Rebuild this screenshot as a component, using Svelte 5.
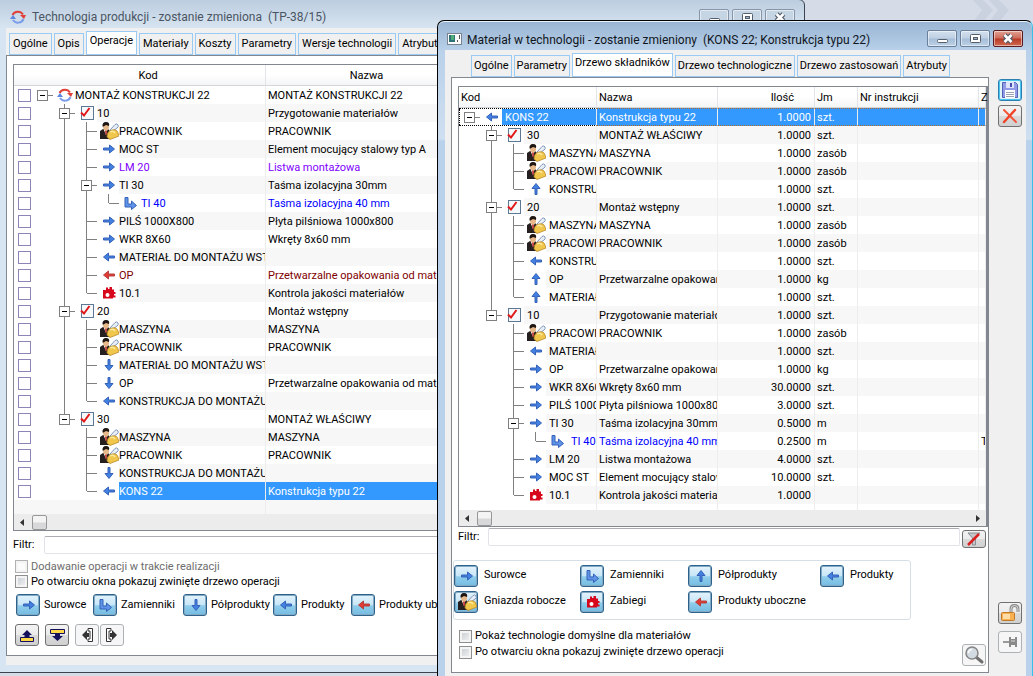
<script lang="ts">
	type Row = {
		depth: number;
		icon: string;
		kod: string;
		nazwa?: string;
		ilosc?: string;
		jm?: string;
		z?: string;
		color?: string;
		open?: boolean;
		selected?: boolean;
	};

	const operationTabs = [
		'Ogólne',
		'Opis',
		'Operacje',
		'Materiały',
		'Koszty',
		'Parametry',
		'Wersje technologii',
		'Atrybuty'
	];
	const materialTabs = [
		'Ogólne',
		'Parametry',
		'Drzewo składników',
		'Drzewo technologiczne',
		'Drzewo zastosowań',
		'Atrybuty'
	];

	let operationTab = $state('Operacje');
	let materialTab = $state('Drzewo składników');
	let operationFilter = $state('');
	let materialFilter = $state('');

	const operations: Row[] = [
		{ depth: 0, icon: 'cycle', kod: 'MONTAŻ KONSTRUKCJI 22', nazwa: 'MONTAŻ KONSTRUKCJI 22', open: true },
		{ depth: 1, icon: 'check', kod: '10', nazwa: 'Przygotowanie materiałów', open: true },
		{ depth: 2, icon: 'worker', kod: 'PRACOWNIK', nazwa: 'PRACOWNIK' },
		{ depth: 2, icon: 'right', kod: 'MOC ST', nazwa: 'Element mocujący stalowy typ A' },
		{ depth: 2, icon: 'right', kod: 'LM 20', nazwa: 'Listwa montażowa', color: 'purple' },
		{ depth: 2, icon: 'right', kod: 'TI 30', nazwa: 'Taśma izolacyjna 30mm', open: true },
		{ depth: 3, icon: 'elbow', kod: 'TI 40', nazwa: 'Taśma izolacyjna 40 mm', color: 'blue' },
		{ depth: 2, icon: 'right', kod: 'PILŚ 1000X800', nazwa: 'Płyta pilśniowa 1000x800' },
		{ depth: 2, icon: 'right', kod: 'WKR 8X60', nazwa: 'Wkręty 8x60 mm' },
		{ depth: 2, icon: 'left', kod: 'MATERIAŁ DO MONTAŻU WSTĘPNEGO' },
		{ depth: 2, icon: 'redleft', kod: 'OP', nazwa: 'Przetwarzalne opakowania od materiałów', color: 'maroon' },
		{ depth: 2, icon: 'gear', kod: '10.1', nazwa: 'Kontrola jakości materiałów' },
		{ depth: 1, icon: 'check', kod: '20', nazwa: 'Montaż wstępny', open: true },
		{ depth: 2, icon: 'worker', kod: 'MASZYNA', nazwa: 'MASZYNA' },
		{ depth: 2, icon: 'worker', kod: 'PRACOWNIK', nazwa: 'PRACOWNIK' },
		{ depth: 2, icon: 'down', kod: 'MATERIAŁ DO MONTAŻU WSTĘPNEGO' },
		{ depth: 2, icon: 'down', kod: 'OP', nazwa: 'Przetwarzalne opakowania od materiałów' },
		{ depth: 2, icon: 'left', kod: 'KONSTRUKCJA DO MONTAŻU WŁAŚCIWEGO' },
		{ depth: 1, icon: 'check', kod: '30', nazwa: 'MONTAŻ WŁAŚCIWY', open: true },
		{ depth: 2, icon: 'worker', kod: 'MASZYNA', nazwa: 'MASZYNA' },
		{ depth: 2, icon: 'worker', kod: 'PRACOWNIK', nazwa: 'PRACOWNIK' },
		{ depth: 2, icon: 'down', kod: 'KONSTRUKCJA DO MONTAŻU WŁAŚCIWEGO' },
		{ depth: 2, icon: 'left', kod: 'KONS 22', nazwa: 'Konstrukcja typu 22', selected: true }
	];

	const components: Row[] = [
		{ depth: 0, icon: 'left', kod: 'KONS 22', nazwa: 'Konstrukcja typu 22', ilosc: '1.0000', jm: 'szt.', open: true, selected: true },
		{ depth: 1, icon: 'check', kod: '30', nazwa: 'MONTAŻ WŁAŚCIWY', ilosc: '1.0000', jm: 'szt.', open: true },
		{ depth: 2, icon: 'worker', kod: 'MASZYNA', nazwa: 'MASZYNA', ilosc: '1.0000', jm: 'zasób' },
		{ depth: 2, icon: 'worker', kod: 'PRACOWNIK', nazwa: 'PRACOWNIK', ilosc: '1.0000', jm: 'zasób' },
		{ depth: 2, icon: 'up', kod: 'KONSTRUKCJA', ilosc: '1.0000', jm: 'szt.' },
		{ depth: 1, icon: 'check', kod: '20', nazwa: 'Montaż wstępny', ilosc: '1.0000', jm: 'szt.', open: true },
		{ depth: 2, icon: 'worker', kod: 'MASZYNA', nazwa: 'MASZYNA', ilosc: '1.0000', jm: 'zasób' },
		{ depth: 2, icon: 'worker', kod: 'PRACOWNIK', nazwa: 'PRACOWNIK', ilosc: '1.0000', jm: 'zasób' },
		{ depth: 2, icon: 'left', kod: 'KONSTRUKCJA', ilosc: '1.0000', jm: 'szt.' },
		{ depth: 2, icon: 'up', kod: 'OP', nazwa: 'Przetwarzalne opakowania', ilosc: '1.0000', jm: 'kg' },
		{ depth: 2, icon: 'up', kod: 'MATERIAŁ', ilosc: '1.0000', jm: 'szt.' },
		{ depth: 1, icon: 'check', kod: '10', nazwa: 'Przygotowanie materiałów', ilosc: '1.0000', jm: 'szt.', open: true },
		{ depth: 2, icon: 'worker', kod: 'PRACOWNIK', nazwa: 'PRACOWNIK', ilosc: '1.0000', jm: 'zasób' },
		{ depth: 2, icon: 'left', kod: 'MATERIAŁ', ilosc: '1.0000', jm: 'szt.' },
		{ depth: 2, icon: 'right', kod: 'OP', nazwa: 'Przetwarzalne opakowania', ilosc: '1.0000', jm: 'kg' },
		{ depth: 2, icon: 'right', kod: 'WKR 8X60', nazwa: 'Wkręty 8x60 mm', ilosc: '30.0000', jm: 'szt.' },
		{ depth: 2, icon: 'right', kod: 'PILŚ 1000X800', nazwa: 'Płyta pilśniowa 1000x800', ilosc: '3.0000', jm: 'szt.' },
		{ depth: 2, icon: 'right', kod: 'TI 30', nazwa: 'Taśma izolacyjna 30mm', ilosc: '0.5000', jm: 'm', open: true },
		{ depth: 3, icon: 'elbow', kod: 'TI 40', nazwa: 'Taśma izolacyjna 40 mm', ilosc: '0.2500', jm: 'm', z: 'TI 30', color: 'blue' },
		{ depth: 2, icon: 'right', kod: 'LM 20', nazwa: 'Listwa montażowa', ilosc: '4.0000', jm: 'szt.' },
		{ depth: 2, icon: 'right', kod: 'MOC ST', nazwa: 'Element mocujący stalowy typ A', ilosc: '10.0000', jm: 'szt.' },
		{ depth: 2, icon: 'gear', kod: '10.1', nazwa: 'Kontrola jakości materiałów', ilosc: '1.0000' }
	];

	const operationLegend = [
		['right', 'Surowce'],
		['elbow', 'Zamienniki'],
		['down', 'Półprodukty'],
		['left', 'Produkty'],
		['redleft', 'Produkty uboczne']
	];
	const materialLegend = [
		['right', 'Surowce'],
		['elbow', 'Zamienniki'],
		['up', 'Półprodukty'],
		['left', 'Produkty'],
		['worker', 'Gniazda robocze'],
		['gear', 'Zabiegi'],
		['redleft', 'Produkty uboczne']
	];

	// does the branch at this depth go on below row i?
	function continues(rows: Row[], i: number, depth: number) {
		for (let j = i + 1; j < rows.length; j++) {
			if (rows[j].depth < depth) return false;
			if (rows[j].depth === depth) return true;
		}
		return false;
	}

	function guides(rows: Row[], i: number) {
		const row = rows[i];
		const out: string[] = [];
		for (let d = 0; d <= row.depth; d++) {
			const more = d > 0 && continues(rows, i, d);
			if (d < row.depth) out.push(more ? 'M11.5 0V18' : '');
			else out.push((d > 0 ? 'M11.5 0V9' : '') + (more ? 'M11.5 9V18' : '') + 'M11.5 9.5H22');
		}
		return out;
	}

	const turn: Record<string, number> = { right: 0, down: 90, left: 180, redleft: 180, up: 270 };
</script>

{#snippet icon(name: string)}
	<svg class="icon" width="22" height="18" viewBox="0 0 22 18" aria-hidden="true">
		{#if name in turn}
			<path
				d="M6.5 8H12.500V5L17.500 9L12.500 13V10H6.500Z"
				transform="rotate({turn[name]} 12 9)"
				fill={name === 'redleft' ? '#e23a35' : '#4280e2'}
				stroke={name === 'redleft' ? '#b3403c' : '#3562b8'}
				stroke-width="1"
			/>
		{:else if name === 'elbow'}
			<path d="M6 3.500H9V10H12.500V7L17.500 11.500L12.500 15.500V13H6Z" fill="#5f93e8" stroke="#3562b8" />
		{:else if name === 'cycle'}
			<path d="M6.500 7A6 6 0 0 1 17 6.500" fill="none" stroke="#e04038" stroke-width="2" />
			<path d="M14 7h6l-2 4z" fill="#e04038" />
			<path d="M17.500 11A6 6 0 0 1 7 12" fill="none" stroke="#7a9ce8" stroke-width="2" />
			<path d="M4 11h6L7 7z" fill="#5b86e0" />
		{:else if name === 'check'}
			<rect x="6.500" y="2.500" width="12" height="13" fill="#f6f9fc" stroke="#5d7894" />
			<path d="M6 8.500L9 11.500L14.500 4" fill="none" stroke="#e01818" stroke-width="2" />
		{:else if name === 'worker'}
			<path d="M3 17V9L6 7H11L13 9V17Z" fill="#25201f" />
			<path d="M6.500 7L9 13L10.500 7Z" fill="#fff" />
			<path d="M8 8h2l-.5 5h-1z" fill="#c22525" />
			<path d="M6 2h6v4q-1 3-3 3T6 6z" fill="#e7b98a" />
			<path d="M5.500 4.500Q5 0 9 0T12 4L9 3L6.500 4.500Z" fill="#1c1512" />
			<path d="M13 8L18 2.500Q20 1 21 3T20 6L16 9Z" fill="#e7eef8" stroke="#8298b8" />
			<path d="M10 15Q10 9 15 8Q20 7 21 11L22 14L13 17.500Z" fill="#f0c64b" stroke="#b98a2a" stroke-width=".8" />
			<path d="M13 10Q16 8 18 11" fill="none" stroke="#fbeaa0" stroke-width="1.500" />
		{:else if name === 'gear'}
			<path
				d="M6 6H9V3.500H11V5H12.500V3H15V5.500H17V8H18.500V10H17V11.500H18.500V13.500H16V14.500H6Z"
				fill="#d8081c"
			/>
			<circle cx="10.500" cy="11" r="2" fill="#fff" />
		{/if}
	</svg>
{/snippet}

{#snippet tree(rows: Row[], i: number)}
	<div class="node">
		{#each guides(rows, i) as d, n}
			<svg class="guide" width="22" height="18" viewBox="0 0 22 18" aria-hidden="true">
				<path {d} fill="none" stroke="#808080" />
				{#if n === rows[i].depth && rows[i].open}
					<rect x="6.500" y="4.500" width="10" height="10" fill="#fff" stroke="#808080" />
					<path d="M9 9.500H14" stroke="#000" />
				{/if}
			</svg>
		{/each}
		{@render icon(rows[i].icon)}
		<span class="label">{rows[i].kod}</span>
	</div>
{/snippet}

{#snippet scrollbar()}
	<div class="scrollbar">
		<svg width="18" height="15" viewBox="0 0 18 15"><path d="M10 4v7L6 7.500z" fill="#333" /></svg>
		<span class="thumb"></span>
		<svg class="end" width="18" height="15" viewBox="0 0 18 15"><path d="M8 4v7l4-3.500z" fill="#333" /></svg>
	</div>
{/snippet}

{#snippet windowButtons()}
	<div class="window-buttons">
		<button type="button" aria-label="Minimalizuj">
			<svg width="28" height="15" viewBox="0 0 28 15"><rect x="9.500" y="8.500" width="10" height="3" rx="1" fill="#fff" stroke="#555e6b" /></svg>
		</button>
		<button type="button" aria-label="Maksymalizuj">
			<svg width="28" height="15" viewBox="0 0 28 15">
				<rect x="9.500" y="3.500" width="10" height="8" rx="1" fill="#fff" stroke="#555e6b" />
				<rect x="12.500" y="6.500" width="4" height="2" fill="#9fb0c4" stroke="#555e6b" />
			</svg>
		</button>
		<button type="button" class="close" aria-label="Zamknij">
			<svg width="28" height="15" viewBox="0 0 28 15">
				<path d="M10.500 4L17.500 11M17.500 4L10.500 11" stroke="#555e6b" stroke-width="5" />
				<path d="M10.500 4L17.500 11M17.500 4L10.500 11" stroke="#fff" stroke-width="2.500" />
			</svg>
		</button>
	</div>
{/snippet}

<div class="desktop">
	<svg class="chevrons" width="60" height="22" viewBox="0 0 60 22" aria-hidden="true">
		<path d="M0 0H10L20 10L10 22H0L9 10ZM16 0H26L36 10L26 22H16L25 10Z" fill="#cbd2df" />
	</svg>

	<section class="window operations">
		<header>
			{@render icon('cycle')}
			<h1>Technologia produkcji - zostanie zmieniona&nbsp; (TP-38/15)</h1>
			{@render windowButtons()}
		</header>
		<div class="client">
			<div class="main">
				<nav class="tabs">
					{#each operationTabs as tab}
						<button type="button" class:active={tab === operationTab} onclick={() => (operationTab = tab)}>{tab}</button>
					{/each}
				</nav>
				<div class="panel">
					<div class="grid">
						<table>
							<colgroup>
								<col class="w-box" />
								<col class="w-code" />
								<col class="w-name" />
								<col />
							</colgroup>
							<thead>
								<tr>
									<th></th>
									<th>Kod</th>
									<th>Nazwa</th>
									<th></th>
								</tr>
							</thead>
							<tbody>
								{#each operations as row, i}
									<tr class={row.color} class:selected={row.selected}>
										<td class="box"><input type="checkbox" aria-label={row.kod} /></td>
										<td class="code">{@render tree(operations, i)}</td>
										<td>{row.nazwa ?? ''}</td>
										<td></td>
									</tr>
								{/each}
								<tr class="rest"><td></td><td></td><td></td><td></td></tr>
							</tbody>
						</table>
						{@render scrollbar()}
					</div>
					<div class="filter">
						<label for="operation-filter">Filtr:</label>
						<input id="operation-filter" type="text" bind:value={operationFilter} />
					</div>
					<div class="options">
						<label class="disabled"><input type="checkbox" disabled />Dodawanie operacji w trakcie realizacji</label>
						<label><input type="checkbox" />Po otwarciu okna pokazuj zwinięte drzewo operacji</label>
					</div>
					<div class="legend">
						{#each operationLegend as [name, text]}
							<div class="item">
								<button type="button" class="blue-button" aria-label={text}>{@render icon(name)}</button>
								<span>{text}</span>
							</div>
						{/each}
					</div>
					<div class="tools">
						<button type="button" class="tool" aria-label="W górę">
							<svg width="22" height="20" viewBox="0 0 22 20">
								<path d="M4.500 12.500H17.500V16.500H4.500Z" fill="#ffd84a" stroke="#14105c" />
								<path d="M11 5L16 10H13.500V13H8.500V10H6Z" fill="#14105c" />
							</svg>
						</button>
						<button type="button" class="tool" aria-label="W dół">
							<svg width="22" height="20" viewBox="0 0 22 20">
								<path d="M4.500 4.500H18.500V8.500H4.500Z" fill="#ffd84a" stroke="#14105c" />
								<path d="M11.500 16L17 11H14V8H9V11H6Z" fill="#14105c" />
							</svg>
						</button>
						<div class="pair">
							<button type="button" class="tool faint" aria-label="W lewo">
								<svg width="22" height="20" viewBox="0 0 22 20">
									<path d="M12 3.500H16.500V16.500H12V14H14V6H12Z" fill="#fff" stroke="#333" />
									<path d="M6 10L11 5V8H13V12H11V15Z" fill="#333" />
								</svg>
							</button>
							<button type="button" class="tool faint" aria-label="W prawo">
								<svg width="22" height="20" viewBox="0 0 22 20">
									<path d="M10 3.500H5.500V16.500H10V14H8V6H10Z" fill="#fff" stroke="#333" />
									<path d="M16 10L11 5V8H9V12H11V15Z" fill="#333" />
								</svg>
							</button>
						</div>
					</div>
				</div>
			</div>
		</div>
	</section>

	<section class="window material">
		<header>
			<svg class="icon" width="22" height="18" viewBox="0 0 22 18" aria-hidden="true">
				<rect x="2.500" y="3.500" width="14" height="11" fill="#fafafa" stroke="#7a8490" />
				<rect x="4" y="5" width="6" height="7" fill="#2f6f78" />
				<rect x="6" y="5" width="3" height="5" fill="#4fae78" />
				<path d="M12.500 10v2M14.500 5v4" stroke="#555" />
			</svg>
			<h1>Materiał w technologii - zostanie zmieniony&nbsp; (KONS 22; Konstrukcja typu 22)</h1>
			{@render windowButtons()}
		</header>
		<div class="client">
			<div class="main">
				<nav class="tabs">
					{#each materialTabs as tab}
						<button type="button" class:active={tab === materialTab} onclick={() => (materialTab = tab)}>{tab}</button>
					{/each}
				</nav>
				<div class="panel">
					<div class="grid">
						<table>
							<colgroup>
								<col class="w-kod" />
								<col class="w-nazwa" />
								<col class="w-ilosc" />
								<col class="w-jm" />
								<col class="w-nr" />
								<col />
							</colgroup>
							<thead>
								<tr>
									<th>Kod</th>
									<th>Nazwa</th>
									<th class="number">Ilość</th>
									<th>Jm</th>
									<th>Nr instrukcji</th>
									<th>Z</th>
								</tr>
							</thead>
							<tbody>
								{#each components as row, i}
									<tr class:selected={row.selected}>
										<td class="code {row.color}">{@render tree(components, i)}</td>
										<td class={row.color}>{row.nazwa ?? ''}</td>
										<td class="number">{row.ilosc}</td>
										<td>{row.jm ?? ''}</td>
										<td></td>
										<td>{row.z ?? ''}</td>
									</tr>
								{/each}
								<tr class="rest"><td></td><td></td><td></td><td></td><td></td><td></td></tr>
							</tbody>
						</table>
						{@render scrollbar()}
					</div>
					<div class="filter">
						<label for="material-filter">Filtr:</label>
						<input id="material-filter" type="text" bind:value={materialFilter} />
						<button type="button" class="tool" aria-label="Wyczyść filtr">
							<svg width="22" height="16" viewBox="0 0 22 16">
								<path d="M5 2H17L12.500 7V14H9.500V7Z" fill="#c4c6c8" stroke="#8b8e92" />
								<path d="M5 14L16 3" stroke="#dc2020" stroke-width="2.500" />
							</svg>
						</button>
					</div>
					<div class="legend">
						{#each materialLegend as [name, text]}
							<div class="item">
								<button type="button" class="blue-button" aria-label={text}>{@render icon(name)}</button>
								<span>{text}</span>
							</div>
						{/each}
					</div>
					<div class="footer">
						<div class="options">
							<label><input type="checkbox" />Pokaż technologie domyślne dla materiałów</label>
							<label><input type="checkbox" />Po otwarciu okna pokazuj zwinięte drzewo operacji</label>
						</div>
						<button type="button" class="tool faint" aria-label="Szukaj">
							<svg width="22" height="20" viewBox="0 0 22 20">
								<path d="M13 12L19 17" stroke="#6f6f6f" stroke-width="3" stroke-linecap="round" />
								<circle cx="9" cy="8" r="6" fill="#d3dbe2" stroke="#858585" stroke-width="1.500" />
								<path d="M5.500 8A3.500 3.500 0 0 1 9 4.500" fill="none" stroke="#fff" stroke-width="1.500" />
							</svg>
						</button>
					</div>
				</div>
			</div>
			<aside>
				<button type="button" class="tool save" aria-label="Zapisz">
					<svg width="22" height="20" viewBox="0 0 22 20">
						<path d="M3.500 2.500H16.500L18.500 4.500V17.500H3.500Z" fill="#8f9be6" stroke="#5560b4" />
						<rect x="7" y="2" width="8" height="6" fill="#dfe4fa" />
						<rect x="11" y="3" width="2" height="4" fill="#4450a8" />
						<rect x="6" y="10" width="10" height="8" fill="#fff" />
						<path d="M7 12.500H15M7 14.500H15M7 16.500H15" stroke="#9aa2b4" />
					</svg>
				</button>
				<button type="button" class="tool" aria-label="Anuluj">
					<svg width="22" height="20" viewBox="0 0 22 20">
						<path d="M5 4L17 16" stroke="#f2553a" stroke-width="2" stroke-linecap="round" />
						<path d="M16 4L5 16" stroke="#f04428" stroke-width="2.500" stroke-linecap="round" />
					</svg>
				</button>
				<button type="button" class="tool lock" aria-label="Odblokuj">
					<svg width="22" height="20" viewBox="0 0 22 20">
						<path d="M12 10V6Q12 2.500 15.500 2.500T19 6V9" fill="none" stroke="#8b8b8b" stroke-width="3" />
						<path d="M12 10V6Q12 2.500 15.500 2.500T19 6V9" fill="none" stroke="#d8d8d8" />
						<rect x="2.500" y="9.500" width="13" height="8" rx="1" fill="#f9b050" stroke="#c07a28" />
						<path d="M4 11H11V16H4Z" fill="#fddca8" />
					</svg>
				</button>
				<button type="button" class="tool faint" aria-label="Przypnij">
					<svg width="22" height="20" viewBox="0 0 22 20">
						<path d="M4 10H11" stroke="#9a9a9a" stroke-width="2" />
						<path d="M10 5H12V7H16V5H18V15H16V13H12V15H10Z" fill="#8a8a8a" />
						<path d="M12 9H16" stroke="#d5d5d5" />
					</svg>
				</button>
			</aside>
		</div>
	</section>
</div>

<style>
	:global(body) {
		margin: 0;
	}

	.desktop {
		position: relative;
		height: 100vh;
		overflow: hidden;
		background: #d5dce8;
		color: #000;
		font: 11px/14px Roboto, 'Liberation Sans', sans-serif;
	}

	.chevrons {
		position: absolute;
		top: 0;
		right: 0;
	}

	button,
	input {
		box-sizing: border-box;
		margin: 0;
		font: inherit;
		color: inherit;
	}

	button {
		padding: 0;
	}

	svg {
		display: block;
		flex: none;
	}

	.guide {
		shape-rendering: crispEdges;
	}

	/* windows */
	.window {
		position: absolute;
		box-sizing: border-box;
		display: flex;
		flex-direction: column;
		border: 1px solid #3c4350;
	}

	.operations {
		top: -1px;
		bottom: 3px;
		left: -1px;
		right: 228px;
		padding: 0 6px 7px;
		border-radius: 0 6px 0 0;
		background: linear-gradient(#bccddf, #d7e4f1 28px);
	}

	.material {
		top: 20px;
		bottom: -8px;
		left: 437px;
		right: 0;
		padding: 0 6px 5px 7px;
		border-color: #000 #35c0e8 #000 #000;
		border-radius: 7px 7px 0 0;
		background: linear-gradient(#98b4d2, #b9d1ea 30px, #cfdff0 118px, #b9d1ea 120px);
		box-shadow: inset 0 1px #e6f2fb;
	}

	header {
		display: flex;
		align-items: center;
		flex: none;
		height: 28px;
	}

	.material header {
		height: 29px;
	}

	.operations header {
		padding: 6px 0 0;
		box-sizing: border-box;
	}

	h1 {
		flex: 1;
		margin: 0 0 0 4px;
		font: 12px/16px Roboto, 'Liberation Sans', sans-serif;
		white-space: nowrap;
		color: #4a5563;
	}

	.material h1 {
		margin: 8px 0 0;
		color: #10161e;
	}

	.material header .icon {
		margin-top: 6px;
	}

	.window-buttons {
		display: flex;
		gap: 3px;
		margin-right: 3px;
	}

	.window-buttons button {
		width: 30px;
		height: 17px;
		border: 1px solid #6a7f99;
		border-radius: 2px;
		background: linear-gradient(#d3e0ee, #bfd0e3 48%, #a5bdd7 52%, #bdd2e8);
		box-shadow: inset 0 0 0 1px rgba(255, 255, 255, 0.5);
	}

	.operations .window-buttons button {
		background: #c6d5e4;
		border-color: #8695a8;
	}

	.material .window-buttons {
		margin-top: 6px;
	}

	.material .window-buttons .close {
		border-color: #5b1a1c;
		background: linear-gradient(#e0a193, #cf6b5a 48%, #b83a26 52%, #cf6a52);
	}

	.client {
		display: flex;
		flex: 1;
		min-height: 0;
		background: #f0f0f0;
	}

	.main {
		display: flex;
		flex: 1;
		flex-direction: column;
		min-width: 0;
	}

	.operations .main {
		padding: 3px 0 9px;
	}

	.material .main {
		padding: 3px 0 5px 6px;
	}

	/* tabs */
	.tabs {
		display: flex;
		align-items: flex-end;
		gap: 2px;
		flex: none;
		height: 24px;
		padding-left: 3px;
		overflow: hidden;
	}

	.material .tabs {
		padding-left: 20px;
	}

	.tabs button {
		height: 22px;
		padding: 0 3px;
		border: 1px solid #99cbf5;
		background: #f0f0f0;
		white-space: nowrap;
	}

	.material .tabs button {
		padding-right: 2px;
		padding-left: 2px;
	}

	.tabs .active {
		height: 24px;
		padding-bottom: 4px;
		background: #fff;
	}

	.panel {
		display: flex;
		flex: 1;
		flex-direction: column;
		min-height: 0;
		padding: 8px 0 0 6px;
		border: 1px solid #828790;
		background: #fff;
	}

	/* table of operations or components */
	.grid {
		display: flex;
		flex: 1;
		flex-direction: column;
		min-height: 0;
		border: 1px solid #828790;
	}

	.material .grid {
		border-right-width: 2px;
	}

	table {
		flex: 1;
		width: 100%;
		table-layout: fixed;
		border-collapse: separate;
		border-spacing: 0;
	}

	.w-box {
		width: 17px;
	}
	.w-code {
		width: 235px;
	}
	.w-name {
		width: 202px;
	}
	.w-kod {
		width: 138px;
	}
	.w-nazwa {
		width: 121px;
	}
	.w-ilosc {
		width: 97px;
	}
	.w-jm {
		width: 43px;
	}
	.w-nr {
		width: 121px;
	}

	th {
		height: 18px;
		padding: 2px 0 0;
		border-right: 1px solid #e2e4e7;
		border-bottom: 1px solid #d5d5d5;
		background: linear-gradient(#fff 45%, #f4f5f6);
		font-weight: normal;
	}

	.operations th:first-child,
	.operations td:first-child {
		border-right: 0;
	}

	.material th {
		padding-left: 2px;
		text-align: left;
	}

	td {
		height: 16px;
		padding: 2px 0 0 2px;
		overflow: hidden;
		border-right: 1px solid #ededed;
		line-height: 16px;
		white-space: nowrap;
	}

	td.box,
	td.code {
		height: 18px;
		padding: 0;
	}

	tr:nth-child(even) td:not(.code, .box),
	tr:nth-child(even) .label {
		background: #f7f7f7;
	}

	tbody .rest td {
		height: auto;
		padding: 0;
		background: #fff;
	}

	.material .number {
		padding-right: 3px;
		text-align: right;
	}

	.material th.number {
		padding-right: 20px;
	}

	.node {
		display: flex;
		height: 18px;
		overflow: hidden;
	}

	.label {
		flex: 1;
		min-width: 0;
		padding-top: 2px;
		overflow: hidden;
	}

	.material .label {
		padding-left: 3px;
	}

	.purple {
		color: #8000ff;
	}
	.blue {
		color: #0000ff;
	}
	.maroon {
		color: #800000;
	}

	tbody .selected td:not(.code, .box),
	tbody .selected .label {
		background: #3399ff;
		color: #fff;
	}

	.material .guide:first-child {
		margin-left: -1px;
	}

	/* focus rectangle of the current row */
	.material .selected td {
		height: 15px;
		padding-top: 1px;
		border-top: 1px dotted #b06a28;
		border-bottom: 1px dotted #b06a28;
		line-height: 15px;
	}

	.material .selected td.code {
		height: 16px;
		padding: 0;
		border-top-color: #000;
		border-bottom-color: #000;
	}

	.material .selected .node {
		height: 16px;
		border-left: 1px dotted #000;
	}

	.material .selected .guide {
		margin: -1px 0 -1px -2px;
	}

	.material .selected .icon {
		margin: -1px 0;
	}

	.material .selected .label {
		padding-top: 1px;
	}

	.box input {
		display: block;
		width: 13px;
		height: 13px;
		margin-left: 4px;
		border: 1px solid #8c86b8;
		background: #fff;
		appearance: none;
	}

	.scrollbar {
		display: flex;
		align-items: center;
		height: 16px;
		flex: none;
		background: #ececec;
	}

	.thumb {
		box-sizing: border-box;
		width: 15px;
		height: 15px;
		border: 1px solid #979797;
		border-radius: 2px;
		background: linear-gradient(#f4f4f4 45%, #d8d8da 55%);
	}

	.scrollbar .end {
		margin-left: auto;
	}

	/* lower part */
	.filter {
		display: flex;
		height: 28px;
		padding-top: 5px;
		box-sizing: border-box;
	}

	.filter label {
		width: 31px;
		line-height: 18px;
	}

	.filter input {
		flex: 1;
		min-width: 0;
		height: 18px;
		border: 1px solid #e2e3ea;
		border-top-color: #abadb3;
		border-radius: 2px;
		background: #fff;
	}

	.material .filter {
		height: 33px;
		padding-top: 1px;
	}

	.material .filter label {
		width: 30px;
	}

	.material .filter .tool {
		height: 18px;
		margin: 2px 2px 0 2px;
	}

	.options label {
		display: flex;
		align-items: center;
		gap: 3px;
		height: 15px;
	}

	.options .disabled {
		color: #6d6d6d;
	}

	.options input {
		width: 13px;
		height: 13px;
		margin-left: 2px;
		border: 1px solid #8e8f8f;
		background: linear-gradient(135deg, #c4cad0, #f6f6f6);
		box-shadow: inset 0 0 0 2px #f4f4f4;
		appearance: none;
	}

	.options input:disabled {
		border-color: #b1b1b1;
		background: #fbfbfb;
	}

	.blue-button {
		display: flex;
		align-items: center;
		justify-content: center;
		width: 24px;
		height: 22px;
		flex: none;
		border: 1px solid #2c628b;
		border-radius: 3px;
		background: linear-gradient(#e3f3fc, #c8e6f7 48%, #8fcdec 54%, #74bce2);
		box-shadow: inset 0 0 0 1px #84a9c2;
	}

	.item {
		display: flex;
		gap: 4px;
		white-space: nowrap;
	}

	.item span {
		line-height: 22px;
	}

	.operations .legend {
		display: grid;
		grid-template-columns: 77px 90px 90px 78px auto;
		margin: 5px 0 0 3px;
	}

	.material .legend {
		display: grid;
		grid-template-columns: 126px 108px 132px 88px;
		align-self: flex-start;
		gap: 4px 0;
		margin-left: -5px;
		padding: 4px 2px 6px 0;
		border: 1px solid #d5dfe5;
		border-radius: 3px;
	}

	.material .item {
		gap: 6px;
	}

	.material .item span {
		line-height: 20px;
	}

	.tools {
		display: flex;
		gap: 6px;
		margin: 8px 0 9px 2px;
	}

	.pair {
		display: flex;
		gap: 1px;
	}

	.tool {
		display: flex;
		align-items: center;
		justify-content: center;
		width: 24px;
		height: 22px;
		flex: none;
		border: 1px solid #707070;
		border-radius: 3px;
		background: linear-gradient(#f3f3f3, #ebebeb 48%, #dadada 52%, #d0d0d0);
	}

	.faint {
		border-color: #adb2b5;
		background: #f6f6f6;
	}

	.save {
		border-color: #2c7fae;
		background: #dff3fb;
		box-shadow: inset 0 0 0 1px #48c4ee;
	}

	.footer {
		display: flex;
		justify-content: space-between;
		align-items: flex-end;
		padding: 8px 2px 6px 0;
	}

	.footer .options {
		align-self: flex-start;
		padding-bottom: 6px;
	}

	.footer .options label {
		height: 16px;
	}

	.footer .options input {
		margin-left: 1px;
	}

	aside {
		display: flex;
		flex-direction: column;
		gap: 4px;
		padding: 29px 4px 25px 9px;
	}

	.lock {
		margin: auto 0 3px;
	}
</style>
